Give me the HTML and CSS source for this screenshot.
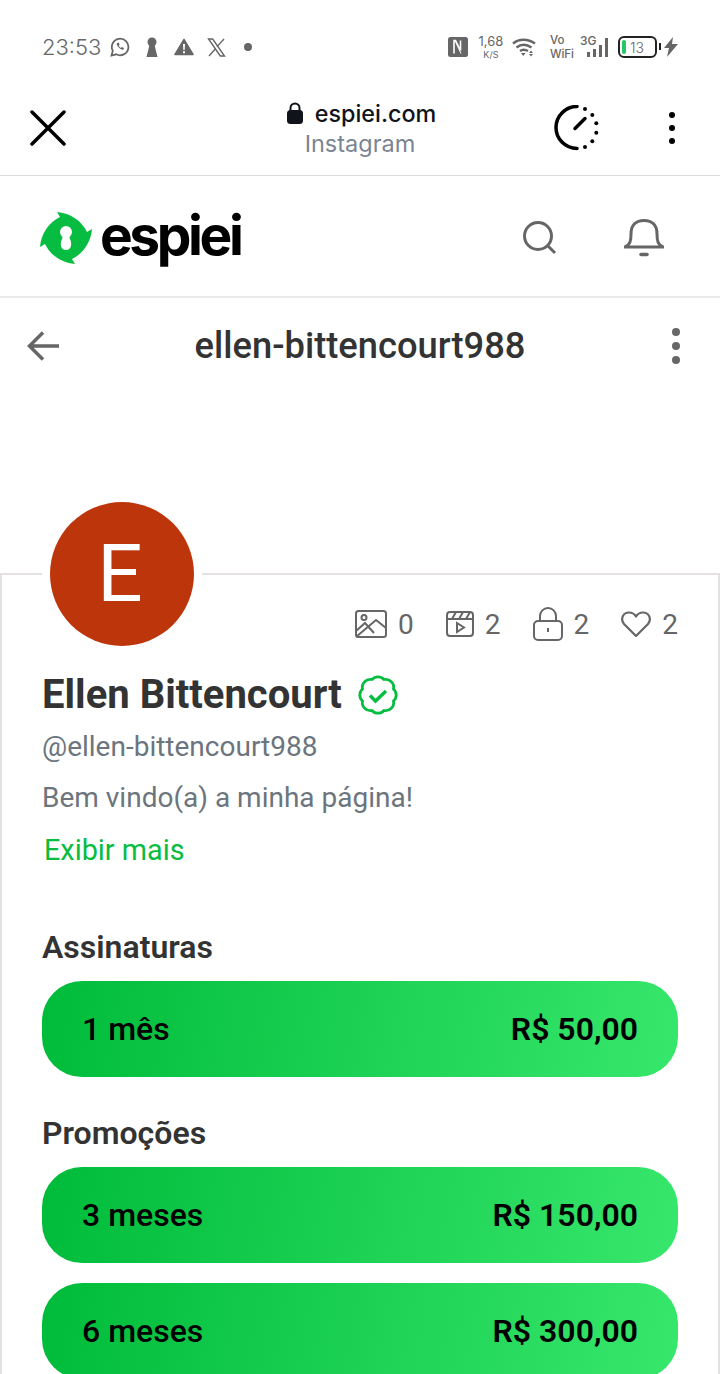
FILE: index.html
```html
<!DOCTYPE html>
<html lang="pt-BR">
<head>
    <meta charset="utf-8">
    <title>espiei.com</title>
    <meta name="viewport" content="width=device-width, initial-scale=1">
    <link rel="stylesheet" href="styles.css">
</head>
<body>

<div class="status-bar">
    <div class="status-side">
        <span class="status-time">23:53</span>
        <svg class="st-whatsapp" width="20" height="20" viewBox="0 0 20 20" fill="none" stroke="#666" stroke-width="1.800"><path d="M1.500 18.500l1.300-4.600A8.300 8.300 0 1 1 6.200 17.300z"/><path d="M6.800 6.300c-.5 2.400 3.800 7 6.500 6.500l.7-1.700-2.100-1.100-.9.900c-1-.4-1.800-1.300-2.300-2.300l.9-.9-1-2.100z" fill="#666" stroke="none"/></svg>
        <svg class="st-key" width="12" height="20" viewBox="0 0 12 20"><circle cx="6" cy="5" r="4.500" fill="#666"/><path d="M4 6h4l3.500 14H.5z" fill="#666"/></svg>
        <svg class="st-warn" width="20" height="18" viewBox="0 0 20 18"><path d="M10 1.500l9 15H1z" fill="#666" stroke="#666" stroke-width="1.500" stroke-linejoin="round"/><path d="M9 6h2l-.3 6H9.300zM9 13.200h2v2H9z" fill="#fff"/></svg>
        <svg class="st-x" width="19" height="19" viewBox="0 0 19 19" fill="none" stroke="#666" stroke-width="1.400"><path d="M1.500 1h4.200l11.800 17h-4.200z"/><path d="M17 1l-7 7.600M8.500 10.800L2 18"/></svg>
        <span class="st-dot"></span>
    </div>
    <div class="status-side">
        <svg class="st-nfc" width="20" height="20" viewBox="0 0 20 20"><rect width="20" height="20" rx="2.500" fill="#666"/><path d="M6 16.500V3.500h1.500l5 10V3.500" fill="none" stroke="#fff" stroke-width="1.600"/><path d="M7 3.500l6 13" fill="none" stroke="#fff" stroke-width="1"/></svg>
        <span class="st-speed"><b>1,68</b><i>K/S</i></span>
        <svg class="st-wifi" width="24" height="20" viewBox="0 0 24 20" fill="none" stroke="#666" stroke-width="2.400"><path d="M1 6.500c6-5 15-5 22 0M4.500 10.500c4.500-3.500 10-3.500 15 0M8 14c2.500-1.800 5-1.800 8 0"/><path d="M9 16h4.500l-2.200 3zM19 13.500l2 2.500h-4zM17 17h4l-2 2.500z" fill="#666" stroke="none"/></svg>
        <span class="st-vowifi"><span>Vo</span><span>WiFi</span></span>
        <span class="st-signal">
            <span class="st-3g">3G</span>
            <svg width="28" height="20" viewBox="0 0 28 20" fill="#666"><rect x="7" y="15" width="3" height="5"/><rect x="13" y="12" width="3" height="8"/><rect x="19" y="8" width="3" height="12"/><rect x="25" y="1" width="3" height="19"/></svg>
        </span>
        <span class="st-battery"><span class="st-level"></span>13</span>
        <svg class="st-bolt" width="14" height="20" viewBox="0 0 14 20"><path d="M9 0L0 11h5l-2 9 11-13H8z" fill="#666"/></svg>
    </div>
</div>

<div class="browser-bar">
    <svg class="br-close" width="36" height="36" viewBox="0 0 36 36" fill="none" stroke="#000" stroke-width="3.500" stroke-linecap="round"><path d="M2 2l32 32M34 2L2 34"/></svg>
    <div class="br-address">
        <div class="br-host">
            <svg width="16" height="22" viewBox="0 0 16 22"><path d="M3.500 9V6a4.500 4.500 0 0 1 9 0v3" fill="none" stroke="#10131a" stroke-width="2"/><rect y="8" width="16" height="14" rx="3.500" fill="#10131a"/></svg>
            <span>espiei.com</span>
        </div>
        <div class="br-app">Instagram</div>
    </div>
    <svg class="br-timer" width="46" height="46" viewBox="0 0 46 46" fill="#000"><path d="M24 1.500a21 21 0 0 0 0 42" fill="none" stroke="#000" stroke-width="3.500" stroke-linecap="round"/><path d="M22 23.500l10-10" stroke="#000" stroke-width="3.500" stroke-linecap="round"/><circle cx="32" cy="4" r="2"/><circle cx="39.300" cy="10" r="2"/><circle cx="43.300" cy="18.300" r="2"/><circle cx="43.300" cy="27.700" r="2"/><circle cx="39.300" cy="36.300" r="2"/><circle cx="32" cy="42" r="2"/></svg>
    <div class="dots dots-black"><span></span><span></span><span></span></div>
</div>

<header class="site-header">
    <div class="logo">
        <svg width="52" height="53" viewBox="0 0 52 53"><path d="M17 0C30 1 42 9 47 20L52 17C51 30 43 42 32 47L35 52C22 51 10 43 5 32L0 35C1 22 9 10 20 5z" fill="#07bd41"/><circle cx="26" cy="20" r="6" fill="#fff"/><path d="M23 24L22 27C20 31 20 38 26 38 32 38 32 31 30 27L29 24z" fill="#fff"/></svg>
        <span class="logo-text">espiei</span>
    </div>
    <div class="header-icons">
        <svg width="34" height="34" viewBox="0 0 34 34" fill="none" stroke="#666" stroke-width="3"><circle cx="15" cy="15" r="13.500"/><path d="M24.500 24.500l7.500 7.500"/></svg>
        <svg width="40" height="38" viewBox="0 0 40 38" fill="none" stroke="#666" stroke-width="3"><path d="M1 28c5-2 6-6 6-13C7 6 12 1.500 20 1.500S33 6 33 15c0 7 1 11 6 13z" stroke-linejoin="round"/><path d="M17 35.500h6" stroke-width="3.500" stroke-linecap="round"/></svg>
    </div>
</header>

<div class="title-bar">
    <svg class="back" width="32" height="30" viewBox="0 0 32 30" fill="none" stroke="#666" stroke-width="3.500"><path d="M16 1.500L2.500 15 16 28.500M3 15h29"/></svg>
    <h1 class="page-title">ellen-bittencourt988</h1>
    <div class="dots dots-gray"><span></span><span></span><span></span></div>
</div>

<section class="profile-card">
    <div class="avatar">E</div>
    <div class="stats">
        <span class="stat">
            <svg width="32" height="28" viewBox="0 0 32 28" fill="none" stroke="#666" stroke-width="2"><rect x="1" y="1" width="30" height="26" rx="2.500"/><circle cx="9" cy="7.500" r="2.500"/><path d="M1 21l9-8 9 10M1 27l20-17 10 8"/></svg>
            0
        </span>
        <span class="stat">
            <svg width="28" height="26" viewBox="0 0 28 26" fill="none" stroke="#666" stroke-width="2"><rect x="1" y="1" width="26" height="24" rx="3"/><path d="M1 8h26M6 8l4-7M13 8l4-7M20 8l4-7"/><path d="M11 12l7 4.500-7 4.500z"/></svg>
            2
        </span>
        <span class="stat">
            <svg width="30" height="34" viewBox="0 0 30 34" fill="none" stroke="#666" stroke-width="2"><rect x="1" y="14" width="28" height="19" rx="4"/><path d="M7 14V9a8 8 0 0 1 16 0v5M15 21v4"/></svg>
            2
        </span>
        <span class="stat">
            <svg width="30" height="26" viewBox="0 0 30 26" fill="none" stroke="#666" stroke-width="2.200"><path d="M15 25L3 13C-1 8 2 1.500 8 1.500c3 0 5.500 1.500 7 4 1.500-2.500 4-4 7-4 6 0 9 6.500 5 11.500z" stroke-linejoin="round"/></svg>
            2
        </span>
    </div>

    <div class="name-row">
        <h2 class="name">Ellen Bittencourt</h2>
        <svg width="40" height="40" viewBox="0 0 40 40" fill="none" stroke="#07bd41" stroke-width="2.800"><path d="M26 4.500A8 8 0 0 1 35.500 14 8 8 0 0 1 35.500 26 8 8 0 0 1 26 35.500 8 8 0 0 1 14 35.500 8 8 0 0 1 4.500 26 8 8 0 0 1 4.500 14 8 8 0 0 1 14 4.500 8 8 0 0 1 26 4.500z"/><path d="M12 20.500l5.500 5.500L28 16" stroke-width="3.400"/></svg>
    </div>
    <p class="handle">@ellen-bittencourt988</p>
    <p class="bio">Bem vindo(a) a minha página!</p>
    <a class="show-more" href="#">Exibir mais</a>

    <h3 class="section-title">Assinaturas</h3>
    <a class="plan" href="#"><span>1 mês</span><span class="plan-price">R$ 50,00</span></a>

    <h3 class="section-title section-promo">Promoções</h3>
    <a class="plan" href="#"><span>3 meses</span><span class="plan-price">R$ 150,00</span></a>
    <a class="plan plan-next" href="#"><span>6 meses</span><span class="plan-price">R$ 300,00</span></a>
</section>

</body>
</html>
```

FILE: styles.css
```css
html, body {
    margin: 0;
    padding: 0;
    height: 1374px;
    overflow: hidden;
    background: #fff;
}

body {
    font-family: Roboto, sans-serif;
    color: #333;
}

/* status bar */

.status-bar {
    height: 86px;
    padding: 8px 42px 0 42px;
    box-sizing: border-box;
    display: flex;
    justify-content: space-between;
    align-items: center;
    color: #666;
}

.status-side {
    display: flex;
    align-items: center;
}

.status-time {
    font-family: Inter, sans-serif;
    font-size: 22px;
    font-weight: 300;
    width: 68px;
}

.st-key { margin-left: 16px; }
.st-warn { margin-left: 16px; }
.st-x { margin-left: 13px; }

.st-dot {
    width: 8px;
    height: 8px;
    margin-left: 18px;
    border-radius: 50%;
    background: #666;
}

.st-speed {
    display: flex;
    flex-direction: column;
    align-items: center;
    width: 28px;
    margin-left: 9px;
    font-family: Inter, sans-serif;
}

.st-speed b {
    font-size: 13px;
    font-weight: 400;
    line-height: 15px;
}

.st-speed i {
    font-size: 9px;
    font-style: normal;
    line-height: 11px;
}

.st-wifi { margin-left: 7px; }

.st-vowifi {
    display: flex;
    flex-direction: column;
    margin-left: 14px;
    font-family: Inter, sans-serif;
    font-size: 11.500px;
    line-height: 14px;
    font-weight: 500;
}

.st-signal {
    position: relative;
    display: flex;
    margin-left: 6px;
}

.st-3g {
    position: absolute;
    left: 0;
    top: -2px;
    font-family: Inter, sans-serif;
    font-size: 12px;
    line-height: 12px;
    font-weight: 500;
}

.st-battery {
    position: relative;
    display: flex;
    align-items: center;
    width: 39px;
    height: 22px;
    margin-left: 10px;
    padding-left: 10px;
    box-sizing: border-box;
    border: 2px solid #222;
    border-radius: 6px;
    font-family: Inter, sans-serif;
    font-size: 14px;
    font-weight: 300;
}

.st-battery::after {
    content: "";
    position: absolute;
    right: -6px;
    top: 5px;
    width: 2px;
    height: 7px;
    background: #222;
}

.st-level {
    position: absolute;
    left: 2px;
    top: 2px;
    bottom: 2px;
    width: 4px;
    border-radius: 2px;
    background: #25c864;
}

.st-bolt { margin-left: 7px; }

/* browser bar */

.browser-bar {
    position: relative;
    height: 90px;
    box-sizing: border-box;
    padding: 0 45px 5px 30px;
    display: flex;
    justify-content: space-between;
    align-items: center;
    border-bottom: 1px solid #dcdcdc;
}

.br-address {
    position: absolute;
    left: 0;
    right: 0;
    top: 10px;
    display: flex;
    flex-direction: column;
    align-items: center;
}

.br-host {
    display: flex;
    align-items: center;
    gap: 12px;
    height: 34px;
    margin-left: 3px;
    font-family: Inter, sans-serif;
    font-size: 23.300px;
    font-weight: 500;
    color: #10131a;
}

.br-app {
    font-family: Inter, sans-serif;
    font-size: 23.500px;
    line-height: 28px;
    color: #7b8490;
}

.br-timer {
    margin-left: auto;
    margin-right: 70px;
}

.dots {
    display: flex;
    flex-direction: column;
}

.dots span {
    display: block;
    border-radius: 50%;
}

.dots-black { gap: 7px; }

.dots-black span {
    width: 6px;
    height: 6px;
    background: #000;
}

.dots-gray { gap: 6px; }

.dots-gray span {
    width: 8px;
    height: 8px;
    background: #666;
}

/* site header */

.site-header {
    height: 122px;
    box-sizing: border-box;
    padding: 4px 56px 0 40px;
    display: flex;
    justify-content: space-between;
    align-items: center;
    border-bottom: 2px solid #e9e9ec;
}

.logo {
    display: flex;
    align-items: center;
    gap: 8px;
}

.logo-text {
    margin-top: -6px;
    font-family: Inter, sans-serif;
    font-size: 55px;
    font-weight: 700;
    letter-spacing: -3.400px;
    line-height: 53px;
    color: #000;
}

.header-icons {
    display: flex;
    align-items: center;
    gap: 67px;
}

/* page title */

.title-bar {
    height: 96px;
    padding: 0 40px 2px 40px;
    box-sizing: border-box;
    display: grid;
    grid-template-columns: 1fr auto 1fr;
    align-items: center;
}

.title-bar .back {
    margin: 2px 0 0 -13px;
}

.title-bar .dots {
    justify-self: end;
    margin-top: 2px;
}

.page-title {
    margin: 0;
    font-size: 36.300px;
    font-weight: 500;
    color: #333;
}

/* profile card */

.profile-card {
    margin-top: 179px;
    padding: 0 40px 0 40px;
    border: 2px solid #e5e0e3;
    border-bottom: 0;
}

.avatar {
    width: 144px;
    height: 144px;
    margin: -73px 0 0 8px;
    padding-right: 4px;
    box-sizing: border-box;
    border-radius: 50%;
    box-shadow: 0 0 0 8px #fff;
    background: #bd360b;
    color: #fff;
    font-size: 80px;
    line-height: 144px;
    text-align: center;
}

.stats {
    display: flex;
    justify-content: flex-end;
    gap: 32px;
    margin-top: -42px;
    height: 40px;
    align-items: center;
}

.stat {
    display: flex;
    align-items: center;
    gap: 11px;
    font-size: 28px;
    color: #666;
}

.name-row {
    display: flex;
    align-items: center;
    gap: 16px;
    margin-top: 29px;
}

.name {
    margin: 0;
    font-size: 40px;
    line-height: 44px;
    font-weight: 700;
    color: #333;
}

.handle,
.bio {
    margin: 0;
    font-size: 28px;
    color: #6c757d;
}

.handle {
    margin-top: 10px;
    line-height: 40px;
}

.bio {
    margin-top: 11px;
    line-height: 40px;
}

.show-more {
    display: block;
    margin: 12px 0 0 2px;
    font-size: 28.800px;
    line-height: 40px;
    color: #07bd41;
    text-decoration: none;
}

.section-title {
    margin: 57px 0 0 0;
    font-size: 32px;
    line-height: 40px;
    font-weight: 600;
    color: #333;
}

.section-promo { margin-top: 36px; }

.plan {
    display: flex;
    justify-content: space-between;
    align-items: center;
    height: 96px;
    margin-top: 14px;
    padding: 0 40px;
    border-radius: 40px;
    background: linear-gradient(100deg, #00bb3a, #37e76c);
    font-size: 32px;
    font-weight: 500;
    color: #000;
    text-decoration: none;
}

.plan-price { font-weight: 600; }

.plan-next { margin-top: 20px; }
```
